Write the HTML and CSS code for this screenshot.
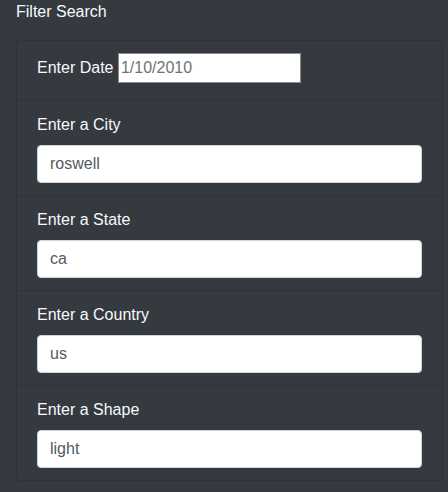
FILE: index.html
```html
<!DOCTYPE html>
<html>
<head>
<meta charset="utf-8">
<link rel="stylesheet" href="styles.css">
</head>
<body>
<div class="panel">
  <h5 class="title">Filter Search</h5>
  <ul class="card">
    <li class="item item-inline">
      <label class="label" for="date">Enter Date</label> <input class="date-input" id="date" type="text" placeholder="1/10/2010">
    </li>
    <li class="item">
      <label class="label" for="city">Enter a City</label>
      <input class="form-control" id="city" type="text" value="roswell">
    </li>
    <li class="item">
      <label class="label" for="state">Enter a State</label>
      <input class="form-control" id="state" type="text" value="ca">
    </li>
    <li class="item">
      <label class="label" for="country">Enter a Country</label>
      <input class="form-control" id="country" type="text" value="us">
    </li>
    <li class="item">
      <label class="label" for="shape">Enter a Shape</label>
      <input class="form-control" id="shape" type="text" value="light">
    </li>
  </ul>
</div>
</body>
</html>
```
FILE: styles.css
```css
html, body {
  margin: 0;
  padding: 0;
  background: #343a40;
}
body {
  font-family: "Liberation Sans", Arial, sans-serif;
  font-size: 16px;
  line-height: 24px;
  color: #f8f9fa;
  width: 448px;
  height: 492px;
  overflow: hidden;
}
.panel {
  padding-left: 16px;
}
.title {
  margin: 0;
  font-size: 16px;
  font-weight: normal;
  line-height: 24px;
  color: #f8f9fa;
}
.card {
  list-style: none;
  margin: 16px 0 0 0;
  padding: 0;
  width: 427px;
  box-sizing: border-box;
  border: 1px solid #2d3237;
  border-radius: 4px;
}
.item {
  padding: 12px 20px;
  border-top: 1px solid #2d3237;
}
.item:first-child {
  border-top: none;
}
.label {
  display: inline-block;
  margin-bottom: 8px;
  color: #f8f9fa;
}
.date-input {
  box-sizing: border-box;
  width: 183px;
  height: 30px;
  padding: 2px 2px;
  border: 1px solid #8a8a8a;
  border-radius: 0;
  font-family: inherit;
  font-size: 16px;
  line-height: 24px;
  background: #fff;
  color: #495057;
  outline: none;
}
.date-input::placeholder {
  color: #6f7378;
  opacity: 1;
}
.form-control {
  display: block;
  box-sizing: border-box;
  width: 100%;
  height: 38px;
  padding: 6px 12px;
  border: 1px solid #ced4da;
  border-radius: 4px;
  background: #fff;
  font-family: inherit;
  font-size: 16px;
  line-height: 24px;
  color: #55595e;
  outline: none;
}
```
